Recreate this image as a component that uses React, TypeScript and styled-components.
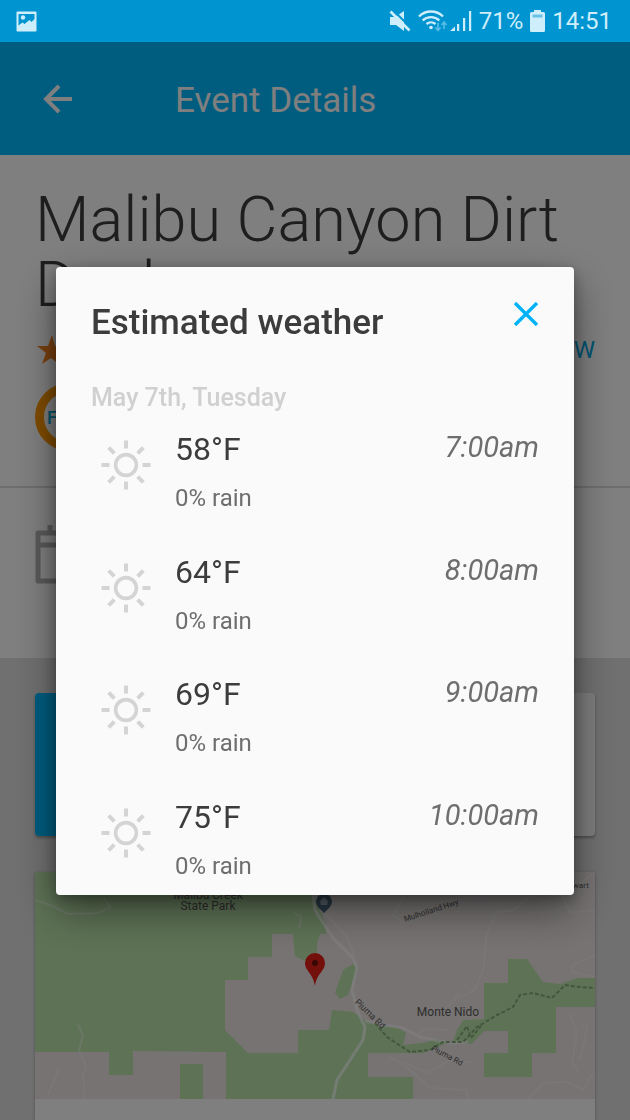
import React from 'react';
import styled, { createGlobalStyle } from 'styled-components';

const GlobalStyle = createGlobalStyle`
  *, *::before, *::after { box-sizing: border-box; }
  body {
    margin: 0;
    font-family: Roboto, "Noto Sans", sans-serif;
    color: #3c3c3c;
    background: #e0e0e0;
  }
  h1, h2, h3, p, ul { margin: 0; padding: 0; }
  ul { list-style: none; }
  svg { display: block; }
`;

const Screen = styled.div`
  display: flex;
  flex-direction: column;
  min-height: 100vh;
`;

const StatusBar = styled.div`
  display: flex;
  align-items: center;
  justify-content: space-between;
  height: 42px;
  padding: 0 18px 0 16px;
  background: #0094d0;
  color: #cfeefb;
`;

const StatusGroup = styled.div<{ $tight?: boolean }>`
  display: flex;
  align-items: center;
  gap: ${({ $tight }) => ($tight ? 2 : 7)}px;
`;

const StatusText = styled.span`
  font-size: 24px;
  line-height: 42px;
`;

const AppBar = styled.header`
  display: flex;
  align-items: center;
  height: 113px;
  padding: 0 42px;
  background: #00baff;
  color: #fff;
`;

const BackButton = styled.button`
  width: 133px;
  padding: 0;
  border: 0;
  background: none;
  color: inherit;
`;

const AppTitle = styled.h2`
  padding-top: 4px;
  font-size: 35px;
  font-weight: 400;
  line-height: 42px;
`;

const Hero = styled.section`
  height: 333px;
  padding: 32px 35px 0;
  background: #fff;
  border-bottom: 2px solid #dcdcdc;
`;

const EventTitle = styled.h1`
  font-size: 63px;
  font-weight: 300;
  line-height: 65px;
`;

const RatingRow = styled.div`
  display: flex;
  align-items: center;
  justify-content: space-between;
  height: 66px;
`;

const ReviewLink = styled.a`
  color: #00a8e8;
  font-size: 24px;
  text-decoration: none;
`;

const Badge = styled.div`
  display: flex;
  align-items: center;
  width: 68px;
  height: 68px;
  padding-left: 3px;
  border: 9px solid #ff9800;
  border-radius: 50%;
  color: #00a8d8;
  font-size: 18px;
  font-weight: 500;
`;

const DateSection = styled.section`
  height: 170px;
  padding: 34px 35px;
  background: #fff;
`;

const Body = styled.main`
  display: flex;
  flex: 1;
  flex-direction: column;
  gap: 36px;
  padding: 35px 35px 0;
  background: #e0e0e0;
`;

const Tabs = styled.div`
  display: grid;
  grid-template-columns: 1fr 1fr;
  height: 143px;
  border-radius: 4px;
  background: #fafafa;
  box-shadow: 0 2px 3px rgba(0, 0, 0, 0.3);
  overflow: hidden;
`;

const ActiveTab = styled.div`
  background: #00baff;
`;

const MapCard = styled.section`
  flex: 1;
  min-height: 248px;
  background: #fff;
  box-shadow: 0 1px 3px rgba(0, 0, 0, 0.3);
`;

const MapDrawing = styled.svg`
  width: 100%;
  height: 227px;
`;

const Scrim = styled.div`
  position: fixed;
  inset: 42px 0 0;
  display: flex;
  align-items: center;
  padding: 0 56px;
  background: rgba(0, 0, 0, 0.5);
`;

const Dialog = styled.section`
  flex: 1;
  height: 628px;
  padding: 33px 35px 0;
  border-radius: 4px;
  background: #fafafa;
  box-shadow: 0 16px 40px rgba(0, 0, 0, 0.45), 0 4px 14px rgba(0, 0, 0, 0.3);
  overflow: hidden;
`;

const DialogHeader = styled.div`
  display: flex;
  align-items: flex-start;
  justify-content: space-between;
`;

const DialogTitle = styled.h2`
  font-size: 35px;
  font-weight: 500;
  line-height: 46px;
`;

const CloseButton = styled.button`
  padding: 2px 0 0;
  border: 0;
  background: none;
  color: #00b2f8;
`;

const DateLabel = styled.h3`
  margin-top: 36px;
  color: #d0d0d0;
  font-size: 25px;
  font-weight: 500;
  line-height: 32px;
`;

const HourList = styled.ul`
  display: grid;
  grid-template-rows: repeat(4, 1fr);
  height: 490px;
`;

const Hour = styled.li`
  display: grid;
  grid-template-columns: 84px 1fr auto;
  padding-top: 16px;
`;

const Sun = styled.svg`
  width: 52px;
  height: 52px;
  margin: 9px 0 0 9px;
`;

const Temperature = styled.p`
  font-size: 32px;
  line-height: 38px;
`;

const Rain = styled.p`
  margin-top: 14px;
  color: #6e6e6e;
  font-size: 24px;
  line-height: 32px;
`;

const Time = styled.time`
  color: #6e6e6e;
  font-size: 29px;
  font-style: italic;
  line-height: 34px;
`;

const hours = [
  { time: '7:00am', temperature: '58°F', rain: '0% rain' },
  { time: '8:00am', temperature: '64°F', rain: '0% rain' },
  { time: '9:00am', temperature: '69°F', rain: '0% rain' },
  { time: '10:00am', temperature: '75°F', rain: '0% rain' },
];

const PictureIcon = () => (
  <svg width="21" height="21" viewBox="0 0 21 21">
    <path fill="currentColor" fillRule="evenodd" d="M1.500 .5h18a1 1 0 0 1 1 1v18a1 1 0 0 1-1 1h-18a1 1 0 0 1-1-1v-18a1 1 0 0 1 1-1zM2.500 3v11.500l4-3 2 1.500 5-4 2 2 3-3V3z" />
    <circle cx="7" cy="6.500" r="2.200" fill="currentColor" />
  </svg>
);

const MutedIcon = () => (
  <svg width="22" height="22" viewBox="0 0 22 22">
    <path fill="currentColor" d="M1 7h5l9-6v20l-8-6H1z" />
    <path stroke="#0094d0" strokeWidth="2" d="M4 0l18 18" />
    <path stroke="currentColor" strokeWidth="2.600" d="M1.500 1.500l19 19" />
  </svg>
);

const WifiIcon = () => (
  <svg width="30" height="22" viewBox="0 0 30 22" fill="none" stroke="currentColor">
    <path strokeWidth="2.400" d="M1 6.500a17 17 0 0 1 24 0M4.700 10.500a12 12 0 0 1 16.600 0M8.500 14a7 7 0 0 1 9 0" />
    <circle cx="13" cy="17.500" r="1.800" fill="currentColor" stroke="none" />
    <path stroke="#55bde6" strokeWidth="1.600" d="M20 13v7M17.500 17.500l2.500 3 2.500-3M26 19v-7M23.500 15l2.500-3 2.500 3" />
  </svg>
);

const SignalIcon = () => (
  <svg width="22" height="22" viewBox="0 0 22 22" fill="currentColor">
    <path d="M0 21l5-4.500V21zM7 14h2.200v7H7zM13 8h2.200v13H13zM19 1h2.200v20H19z" />
  </svg>
);

const BatteryIcon = () => (
  <svg width="15" height="22" viewBox="0 0 15 22">
    <path fill="currentColor" d="M4 0h7v2h2.500a1.500 1.500 0 0 1 1.500 1.500v17a1.500 1.500 0 0 1-1.500 1.500h-12A1.500 1.500 0 0 1 0 20.500v-17A1.500 1.500 0 0 1 1.500 2H4z" />
    <path fill="#68c2e6" d="M2.500 4.500h10v3h-10z" />
  </svg>
);

const SunIcon = () => (
  <Sun viewBox="0 0 52 52" fill="none" stroke="#d4d4d4" strokeWidth="4" aria-hidden="true">
    <circle cx="26" cy="26" r="10.400" strokeWidth="3.600" />
    {[0, 45, 90, 135, 180, 225, 270, 315].map((angle) => (
      <path key={angle} d="M26 1.500v8" transform={`rotate(${angle} 26 26)`} />
    ))}
  </Sun>
);

const ParkMap = () => (
  <MapDrawing viewBox="0 0 560 227" preserveAspectRatio="xMidYMid slice" role="img" aria-label="Map of the event location">
    <rect width="560" height="227" fill="#ede7e5" />
    <g fill="#bce6ac">
      <path d="M0 0H278L279 24 291 52V62H285L282 72V90H272L260 84 258 62H237V85H213V108H190V158L213 181H263V158H294L297 138 318 140 330 148 345 155H362L371 161 368 173 388 171 402 167 412 171 388 181H333V205H378V227H191V180L98 179V203H74V180H0z" />
      <path d="M145 192h23v35h-23zM318 92l4 6-9 25-8 4-5-6 8-23z" />
      <path d="M473 87h19l16 23 17 2 17-6h18v29h-39v46h-24v24h-48v-24h24v-22h-24l-12 13-19-2 4-12 6-10 21-1v-36h24z" />
    </g>
    <g fill="none" stroke="#fff" strokeOpacity=".35" strokeWidth="2">
      <path d="M278 23l2 15 5 8 13 20 20 20 4 9-5 23 5 20 8 17-2 13-26 40-4 19" strokeWidth="3" strokeOpacity=".7" />
      <path d="M330 149l10 2 28 5 17 9 30 6 18-1" strokeWidth="3" strokeOpacity=".6" />
      <path d="M370 24l-12 19 10 7M290 42l22 22 8 22M405 30l50-7h45l40-8 18-14M495 24l-16 14-17 2-10 21-4 37-8 20-22 10M425 120l-12 14M258 40l8 5-2 12" />
      <path d="M355 185l18 11 22 20 37 2v9M368 190l24 11 23-13 20 2M380 164l12-8 22 3M493 227l15-16 24-1 16 8 10-17" />
      <path d="M535 141l7 20-5 30 6 8M552 151l-2 16-5 21M560 83l-22 10-1 7 23 5M525 20l10 20 25-2" />
      <path d="M0 28l15 5 18 9 30-1 12-6-6-9M43 152l5 12-4 14 7 16-3 10 2 23M24 195l-5 14-6 14" />
    </g>
    <path fill="none" stroke="#85ae78" strokeWidth="2" strokeDasharray="4 2" d="M340 151l12 14 23 15 20-2 13-8 20 0 14-15 20-12 16-8 7-12 13-2 19 5 13-13 14 2 16 1M422 168l10-14 4 12 10-12" />
    <path fill="#4f6f86" d="M289 41l-6-6a8 8 0 1 1 12 0z" />
    <path fill="#a9c0cf" d="M289 25l4 4-1 4h-6l-1-4z" />
    <path fill="#e82018" d="M280 114c-2-13-10-15-10-23a10 10 0 0 1 20 0c0 8-8 10-10 23z" />
    <circle cx="280" cy="91" r="3" fill="#701008" />
    <g fill="#5c5c5c" fontFamily="Roboto, sans-serif" fontSize="12" textAnchor="middle">
      <text x="173" y="27">Malibu Creek</text>
      <text x="173" y="38">State Park</text>
      <text x="413" y="144">Monte Nido</text>
      <text x="397" y="41" fontSize="8" transform="rotate(-18 397 41)">Mulholland Hwy</text>
      <text x="333" y="144" fontSize="9" transform="rotate(44 333 144)">Piuma Rd</text>
      <text x="411" y="186" fontSize="8" transform="rotate(28 411 186)">Piuma Rd</text>
      <text x="540" y="16" fontSize="8">Stewart</text>
    </g>
  </MapDrawing>
);

export default function App() {
  return (
    <Screen>
      <GlobalStyle />
      <StatusBar>
        <PictureIcon />
        <StatusGroup>
          <MutedIcon />
          <StatusGroup $tight>
            <WifiIcon />
            <SignalIcon />
          </StatusGroup>
          <StatusText>71%</StatusText>
          <BatteryIcon />
          <StatusText>14:51</StatusText>
        </StatusGroup>
      </StatusBar>
      <AppBar>
        <BackButton aria-label="Back">
          <svg width="32" height="32" viewBox="0 0 32 32" fill="none" stroke="currentColor" strokeWidth="4">
            <path d="M30 16H4M17 3L4 16l13 13" />
          </svg>
        </BackButton>
        <AppTitle>Event Details</AppTitle>
      </AppBar>
      <Hero>
        <EventTitle>Malibu Canyon Dirt Dash</EventTitle>
        <RatingRow>
          <svg width="30" height="30" viewBox="0 0 30 30">
            <path fill="#f58220" d="M17 0l3 11h10l-8 7 3 12-9-7-9 6 4-11-9-7h11z" />
          </svg>
          <ReviewLink href="#review">REVIEW</ReviewLink>
        </RatingRow>
        <Badge>F</Badge>
      </Hero>
      <DateSection>
        <svg width="54" height="62" viewBox="0 0 54 62" fill="none" stroke="#b4b4b4" strokeWidth="5" strokeLinejoin="round">
          <path d="M3 11h48v48H3zM3 23h48M15 3v8M39 3v8" />
        </svg>
      </DateSection>
      <Body>
        <Tabs>
          <ActiveTab />
        </Tabs>
        <MapCard>
          <ParkMap />
        </MapCard>
      </Body>
      <Scrim>
        <Dialog role="dialog" aria-modal="true" aria-labelledby="weather-title">
          <DialogHeader>
            <DialogTitle id="weather-title">Estimated weather</DialogTitle>
            <CloseButton aria-label="Close">
              <svg width="25" height="24" viewBox="0 0 25 24" stroke="currentColor" strokeWidth="3.400">
                <path d="M1 1l22 22M23 1L1 23" />
              </svg>
            </CloseButton>
          </DialogHeader>
          <DateLabel>May 7th, Tuesday</DateLabel>
          <HourList>
            {hours.map((hour) => (
              <Hour key={hour.time}>
                <SunIcon />
                <div>
                  <Temperature>{hour.temperature}</Temperature>
                  <Rain>{hour.rain}</Rain>
                </div>
                <Time>{hour.time}</Time>
              </Hour>
            ))}
          </HourList>
        </Dialog>
      </Scrim>
    </Screen>
  );
}
